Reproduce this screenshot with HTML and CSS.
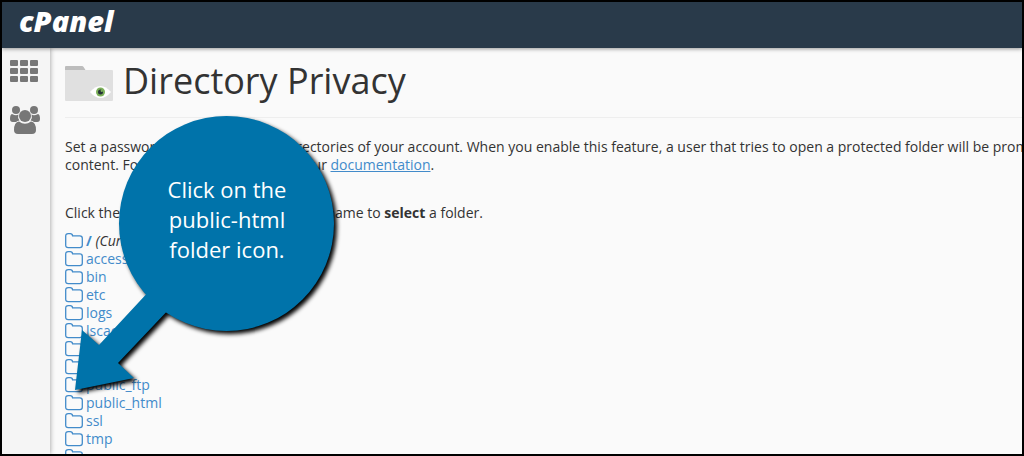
FILE: index.html
```html
<!DOCTYPE html>
<html lang="en">
<head>
    <meta charset="UTF-8">
    <title>cPanel - Directory Privacy</title>
    <meta name="viewport" content="width=device-width, initial-scale=1.0">
    <link rel="stylesheet" href="styles.css">
</head>
<body>
    <!-- shared icons -->
    <svg class="sprite" aria-hidden="true">
        <symbol id="folder" viewBox="0 0 18 16">
            <path d="M0.700 3.200Q0.700 0.700 3.200 0.700H5.200Q7.400 0.700 7.600 2.900H14.800Q17.300 2.900 17.300 5.300V12.300Q17.300 14.600 14.800 14.600H3.200Q0.700 14.600 0.700 12.300Z" fill="none" stroke="#428bca" stroke-width="1.3"/>
        </symbol>
    </svg>

    <header class="navbar">
        <a class="logo" href="#">cPanel</a>
    </header>

    <div class="wrapper">
        <nav class="sidebar">
            <a href="#" aria-label="Home">
                <svg width="30" height="24" viewBox="0 0 30 24" fill="#777">
                    <rect x="0" y="1" width="8" height="6" rx="1"/>
                    <rect x="10" y="1" width="8" height="6" rx="1"/>
                    <rect x="20" y="1" width="8" height="6" rx="1"/>
                    <rect x="0" y="9" width="8" height="6" rx="1"/>
                    <rect x="10" y="9" width="8" height="6" rx="1"/>
                    <rect x="20" y="9" width="8" height="6" rx="1"/>
                    <rect x="0" y="17" width="8" height="6" rx="1"/>
                    <rect x="10" y="17" width="8" height="6" rx="1"/>
                    <rect x="20" y="17" width="8" height="6" rx="1"/>
                </svg>
            </a>
            <a href="#" aria-label="User Manager">
                <svg width="30" height="28" viewBox="0 0 30 28" fill="#777">
                    <circle cx="6" cy="4" r="4"/>
                    <circle cx="24" cy="4" r="4"/>
                    <circle cx="15" cy="10" r="6"/>
                    <path d="M2 8Q6 10.4 8.4 8.6Q7.4 12 9.4 14.4Q7.4 14.6 6 16H2.8Q0 16 0 13Q0 8.4 2 8Z"/>
                    <path d="M28 8Q24 10.4 21.6 8.6Q22.6 12 20.6 14.4Q22.6 14.6 24 16H27.2Q30 16 30 13Q30 8.4 28 8Z"/>
                    <path d="M9 15.4Q15 20 21 15.4Q26 16 26 24Q26 28 22 28H8Q4 28 4 24Q4 16 9 15.4Z"/>
                </svg>
            </a>
        </nav>

        <main class="content">
            <h1 class="page-header">
                <svg width="48" height="36" viewBox="0 0 48 36">
                    <path d="M0 5V1Q0 0 1 0H17Q18 0 18.6 1L20.5 4V5Z" fill="#bdbdbd"/>
                    <path d="M0 4H47Q48 4 48 5V34Q48 35 47 35H1Q0 35 0 34Z" fill="#e0e0e0"/>
                    <path d="M25 26Q30 20 35.500 20Q41 20 46 26Q41 32 35.500 32Q30 32 25 26Z" fill="#fff"/>
                    <circle cx="35.500" cy="26" r="4.500" fill="#7cb05a"/>
                    <circle cx="35.500" cy="26" r="2.500" fill="#263238"/>
                    <circle cx="36.800" cy="24.800" r="1.200" fill="#7cb05a"/>
                </svg>
                <span>Directory Privacy</span>
            </h1>

            <p class="description">Set a password to protect certain directories of your account. When you enable this feature, a user that tries to open a protected folder will be prompted to enter a username and password<br>content. For more information, read our <a href="#">documentation</a>.</p>

            <p class="hint">Click the icon to <b>open</b> a folder. Click the name to <b>select</b> a folder.</p>

            <ul class="folders">
                <li><svg><use href="#folder"/></svg><a href="#"><b>/</b></a>&nbsp;<em>(Current Folder)</em></li>
                <li><svg><use href="#folder"/></svg><a href="#">access-logs</a></li>
                <li><svg><use href="#folder"/></svg><a href="#">bin</a></li>
                <li><svg><use href="#folder"/></svg><a href="#">etc</a></li>
                <li><svg><use href="#folder"/></svg><a href="#">logs</a></li>
                <li><svg><use href="#folder"/></svg><a href="#">lscache</a></li>
                <li><svg><use href="#folder"/></svg><a href="#">lsc</a></li>
                <li><svg><use href="#folder"/></svg><a href="#">mail</a></li>
                <li><svg><use href="#folder"/></svg><a href="#">public_ftp</a></li>
                <li><svg><use href="#folder"/></svg><a href="#">public_html</a></li>
                <li><svg><use href="#folder"/></svg><a href="#">ssl</a></li>
                <li><svg><use href="#folder"/></svg><a href="#">tmp</a></li>
                <li><svg><use href="#folder"/></svg></li>
            </ul>
        </main>
    </div>

    <!-- help bubble pointing at the folder icon -->
    <div class="callout">
        <svg width="280" height="300" viewBox="0 0 280 300" fill="#0073aa">
            <circle cx="166.500" cy="123.500" r="107.500"/>
            <path d="M92 188L39 245L22 230L15 290L74 278L58 263L112 206Z"/>
        </svg>
        <p>Click on the<br>public-html<br>folder icon.</p>
    </div>
</body>
</html>
```
FILE: styles.css
```css
* {
    box-sizing: border-box;
}
body {
    display: flex;
    flex-direction: column;
    height: 100vh;
    margin: 0;
    border: 2px solid #000;
    overflow: hidden;
    background: #fafafa;
    color: #333;
    font-family: "Open Sans", "Noto Sans", sans-serif;
    font-size: 14px;
    line-height: 18px;
}
a {
    color: #428bca;
}
.sprite {
    display: none;
}

/* top bar */
.navbar {
    display: flex;
    align-items: center;
    flex: none;
    height: 46px;
    padding: 0 17px 8px;
    background: #293a4a;
    box-shadow: 0 1px 4px rgba(0, 0, 0, 0.4);
    z-index: 1;
}
.logo {
    color: #fff;
    font-size: 29px;
    font-style: italic;
    font-weight: 800;
    text-decoration: none;
}

.wrapper {
    display: flex;
    flex: 1;
    min-height: 0;
}
.sidebar {
    display: flex;
    flex: none;
    flex-direction: column;
    align-items: center;
    gap: 23px;
    width: 48px;
    padding: 11px 2px 0 0;
    background: #f5f5f5;
    box-shadow: 0 0 5px rgba(0, 0, 0, 0.4);
}
.sidebar svg {
    display: block;
}

/* page */
.content {
    flex: 1;
    min-width: 0;
    padding: 0 0 0 15px;
    overflow: hidden;
}
.page-header {
    display: flex;
    align-items: center;
    gap: 10px;
    height: 70px;
    margin: 0 0 20px;
    padding-top: 2px;
    border-bottom: 1px solid #eee;
    font-size: 36px;
    font-weight: 400;
    line-height: 40px;
}
.page-header span {
    padding-bottom: 6px;
}
.description,
.hint {
    margin: 0 0 30px;
    white-space: nowrap;
}
.hint {
    margin-bottom: 10px;
}
.folders {
    margin: 0;
    padding: 0;
    list-style: none;
}
.folders li {
    display: flex;
    height: 18px;
}
.folders svg {
    width: 18px;
    height: 16px;
    margin: 1px 3px 0 0;
}
.folders a {
    text-decoration: none;
}

/* bubble */
.callout {
    position: absolute;
    top: 100px;
    left: 60px;
    z-index: 2;
}
.callout svg {
    display: block;
    filter: drop-shadow(3px 3px 2px #000);
}
.callout p {
    position: absolute;
    top: 74px;
    left: 60px;
    width: 214px;
    margin: 0;
    color: #fff;
    font-size: 22px;
    line-height: 30px;
    text-align: center;
}
```
